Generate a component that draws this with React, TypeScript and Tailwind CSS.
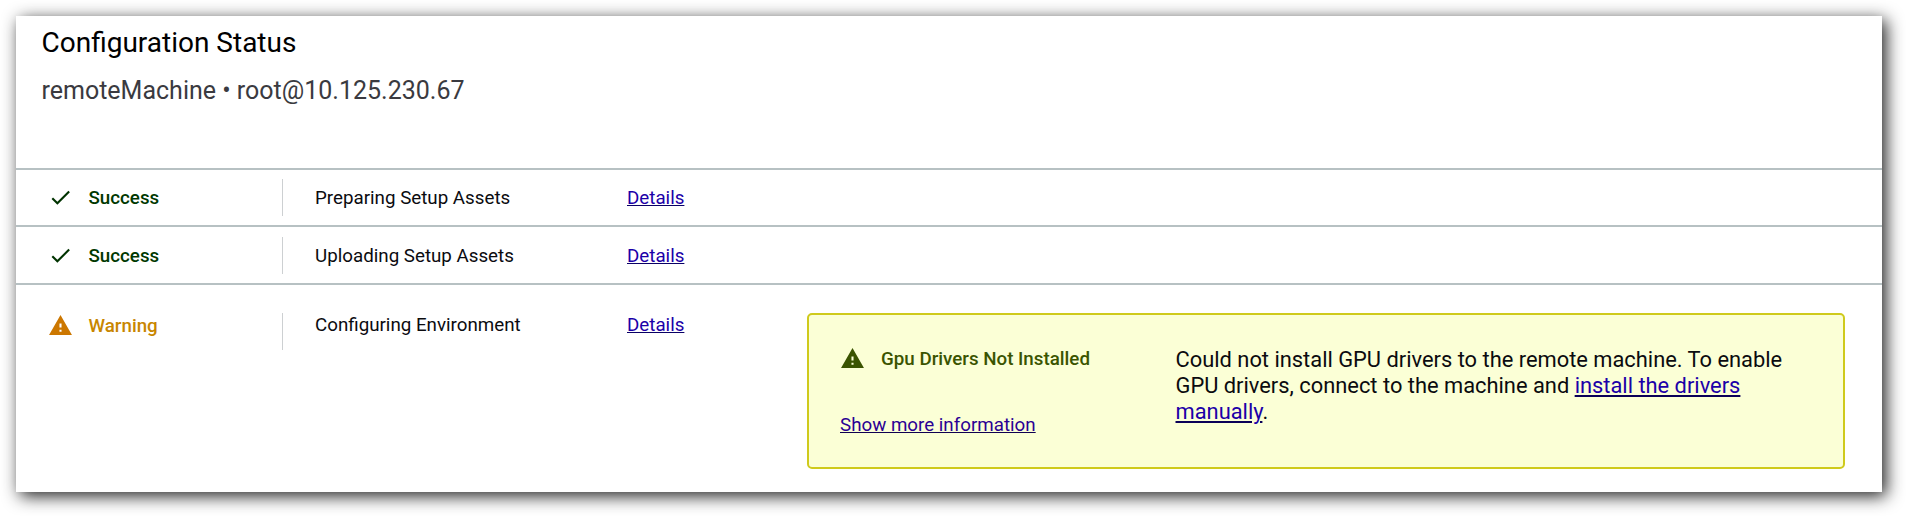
import type { ReactNode } from "react";

function CheckIcon({ className }: { className?: string }) {
  return (
    <svg viewBox="0 0 24 24" fill="currentColor" className={className}>
      <path d="M9 16.17 4.83 12l-1.42 1.41L9 19 21 7l-1.41-1.41z" />
    </svg>
  );
}

function WarningIcon({ className }: { className?: string }) {
  return (
    <svg viewBox="0 0 24 24" fill="currentColor" className={className}>
      <path d="M1 21h22L12 2 1 21zm12-3h-2v-2h2v2zm0-4h-2v-4h2v4z" />
    </svg>
  );
}

function DetailsLink() {
  return (
    <a href="#" className="text-[#1c00a8] underline decoration-[#0a0066] decoration-1 underline-offset-1">
      Details
    </a>
  );
}

function Status({ kind }: { kind: "success" | "warning" }) {
  const success = kind === "success";
  return (
    <div className="flex h-[25px] items-center gap-4 pl-[31.5px] font-medium">
      {success ? (
        <CheckIcon className="size-[25px] text-[#003300]" />
      ) : (
        <WarningIcon className="size-[25px] text-[#cc7700]" />
      )}
      <span className={success ? "pt-0.5 text-[#003800]" : "pt-0.5 text-[#c88600]"}>{success ? "Success" : "Warning"}</span>
    </div>
  );
}

function Row({ kind, label, className, children }: { kind: "success" | "warning"; label: string; className: string; children?: ReactNode }) {
  const text = kind === "success" ? "pt-0.5 leading-[25px]" : "leading-[25px]";
  return (
    <div className={`grid grid-cols-[266px_1px_344px_180px_1fr] border-t-2 border-[#b7c1c3] ${className}`}>
      <Status kind={kind} />
      <div className="h-[37px] bg-[#cdd0d2]" />
      <div className={`pl-8 ${text}`}>{label}</div>
      <div className={text}>
        <DetailsLink />
      </div>
      {children}
    </div>
  );
}

export default function App() {
  return (
    <div className="h-[516px] w-[1906px] overflow-hidden bg-white pt-4 pl-4 font-['Roboto',sans-serif] text-[18.75px] text-[#0b0b0f]">
      <main className="h-[476px] w-[1866px] bg-white shadow-[4px_4px_16px_rgba(0,0,0,0.88)]">
        <header className="h-[152px] pt-[11px] pl-[25.5px]">
          <h1 className="text-[28px] leading-8 text-black">Configuration Status</h1>
          <p className="mt-[18px] text-[25px] leading-7 text-[#3a3a40]">remoteMachine • root@10.125.230.67</p>
        </header>
        <Row kind="success" label="Preparing Setup Assets" className="h-[57px] items-center" />
        <Row kind="success" label="Uploading Setup Assets" className="h-[58px] items-center" />
        <Row kind="warning" label="Configuring Environment" className="items-start pt-7">
          <section className="flex h-[156px] w-[1038px] rounded-[5px] border-2 border-[#cfca1c] bg-[#fbffd6]">
            <div className="w-[366.5px] pt-[31px] pl-[31px]">
              <div className="flex h-[25px] items-center gap-4 font-medium text-[#3a5400]">
                <WarningIcon className="size-[25px]" />
                <span className="pt-0.5">Gpu Drivers Not Installed</span>
              </div>
              <a href="#" className="mt-[42px] block leading-[25px] text-[#2a0094] underline decoration-[#100050] decoration-1 underline-offset-1">
                Show more information
              </a>
            </div>
            <p className="w-[620px] pt-8 text-[21.875px] leading-[26px]">
              Could not install GPU drivers to the remote machine. To enable GPU drivers, connect to the machine and{" "}
              <a href="#" className="text-[#1c00a8] underline decoration-[#0a0058] decoration-2 underline-offset-2">
                install the drivers manually
              </a>
              .
            </p>
          </section>
        </Row>
      </main>
    </div>
  );
}
